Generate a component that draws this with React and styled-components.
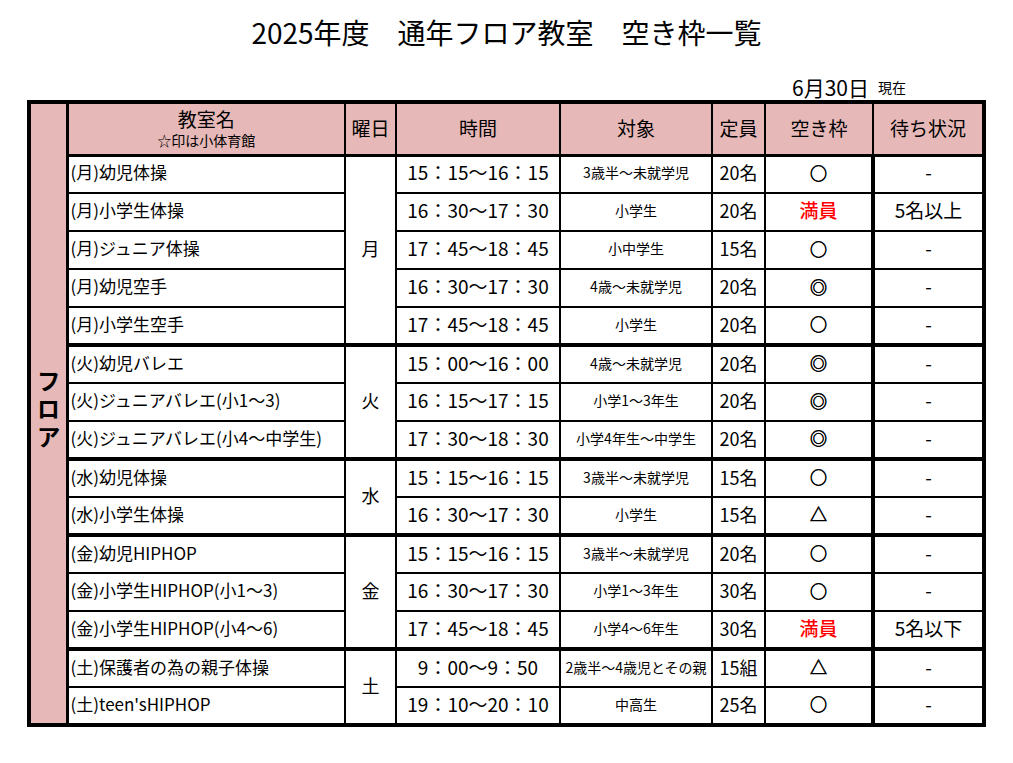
import React from 'react';
import styled, { createGlobalStyle } from 'styled-components';

const GlobalStyle = createGlobalStyle`
    html, body {
        margin: 0;
        padding: 0;
        background: #fff;
    }
    body {
        font-family: "Noto Sans CJK JP", "Noto Sans", sans-serif;
        color: #000;
    }
`;

const PINK = '#e6b8b7';

const Page = styled.div`
    width: 959px;
    margin: 0 auto;
    padding-top: 13px;
`;

const Title = styled.h1`
    margin: 0;
    text-align: center;
    font-size: 28px;
    font-weight: 400;
    line-height: 38px;
    white-space: pre;
`;

const AsOf = styled.div`
    height: 49px;
    display: flex;
    justify-content: flex-end;
    align-items: flex-end;
    gap: 9px;
    padding-right: 80px;
    line-height: 26px;
`;

const AsOfDate = styled.span`
    font-size: 21px;
`;

const AsOfLabel = styled.span`
    font-size: 14px;
`;

const Table = styled.table`
    width: 959px;
    table-layout: fixed;
    border-collapse: collapse;
    border: 4px solid #000;
`;

const HeadRow = styled.tr`
    height: 53px;
`;

const Row = styled.tr`
    height: 38px;
`;

/* 左端の「フロア」帯 */
const AreaCell = styled.td`
    background: ${PINK};
    border-right: 3px solid #000;
    padding: 0;
    text-align: center;
    vertical-align: middle;
`;

const AreaText = styled.span`
    writing-mode: vertical-rl;
    font-size: 24px;
    font-weight: 700;
    letter-spacing: 4px;
`;

const HeadCell = styled.th`
    background: ${PINK};
    border: 2px solid #000;
    border-right-width: ${props => props.$thinRight ? '1px' : '2px'};
    border-bottom: 3px solid #000;
    padding: 0 0 2px;
    font-size: 19px;
    font-weight: 400;
    line-height: 22px;
    text-align: center;
    vertical-align: middle;
    white-space: nowrap;
`;

const HeadMain = styled.div`
    line-height: 25px;
`;

const HeadSub = styled.div`
    font-size: 14px;
    line-height: 19px;
`;

const Cell = styled.td`
    border-left: ${props => props.$left || 2}px solid #000;
    border-right: 2px solid #000;
    border-top: ${props => props.$top}px solid #000;
    padding: 0 ${props => props.$align === 'left' ? '2px' : '0'} 4px;
    font-size: ${props => props.$size || 18}px;
    line-height: 24px;
    text-align: ${props => props.$align || 'center'};
    vertical-align: middle;
    white-space: nowrap;
    overflow: hidden;
    color: ${props => props.$red ? '#ff0000' : '#000'};
    font-weight: ${props => props.$red ? 500 : 400};
`;

/* ○ ◎ △ の記号は太めに */
const Mark = styled.span`
    font-size: 17px;
    -webkit-text-stroke: 0.6px #000;
`;

const groups = [
    { day: '月', rows: [
        ['(月)幼児体操', '15：15～16：15', '3歳半～未就学児', '20名', '○', '-'],
        ['(月)小学生体操', '16：30～17：30', '小学生', '20名', '満員', '5名以上'],
        ['(月)ジュニア体操', '17：45～18：45', '小中学生', '15名', '○', '-'],
        ['(月)幼児空手', '16：30～17：30', '4歳～未就学児', '20名', '◎', '-'],
        ['(月)小学生空手', '17：45～18：45', '小学生', '20名', '○', '-'],
    ] },
    { day: '火', rows: [
        ['(火)幼児バレエ', '15：00～16：00', '4歳～未就学児', '20名', '◎', '-'],
        ['(火)ジュニアバレエ(小1～3)', '16：15～17：15', '小学1～3年生', '20名', '◎', '-'],
        ['(火)ジュニアバレエ(小4～中学生)', '17：30～18：30', '小学4年生～中学生', '20名', '◎', '-'],
    ] },
    { day: '水', rows: [
        ['(水)幼児体操', '15：15～16：15', '3歳半～未就学児', '15名', '○', '-'],
        ['(水)小学生体操', '16：30～17：30', '小学生', '15名', '△', '-'],
    ] },
    { day: '金', rows: [
        ['(金)幼児HIPHOP', '15：15～16：15', '3歳半～未就学児', '20名', '○', '-'],
        ['(金)小学生HIPHOP(小1～3)', '16：30～17：30', '小学1～3年生', '30名', '○', '-'],
        ['(金)小学生HIPHOP(小4～6)', '17：45～18：45', '小学4～6年生', '30名', '満員', '5名以下'],
    ] },
    { day: '土', rows: [
        ['(土)保護者の為の親子体操', '9：00～9：50', '2歳半～4歳児とその親', '15組', '△', '-'],
        ["(土)teen'sHIPHOP", '19：10～20：10', '中高生', '25名', '○', '-'],
    ] },
];

const totalRows = groups.reduce((n, g) => n + g.rows.length, 0);

const App = () => (
    <Page>
        <GlobalStyle />
        <Title>{'2025年度　通年フロア教室　空き枠一覧'}</Title>
        <AsOf>
            <AsOfDate>6月30日</AsOfDate>
            <AsOfLabel>現在</AsOfLabel>
        </AsOf>
        <Table>
            <colgroup>
                <col style={{ width: 38 }} />
                <col style={{ width: 278 }} />
                <col style={{ width: 51 }} />
                <col style={{ width: 164 }} />
                <col style={{ width: 152 }} />
                <col style={{ width: 53 }} />
                <col style={{ width: 108 }} />
                <col style={{ width: 111 }} />
            </colgroup>
            <tbody>
                <HeadRow>
                    <AreaCell rowSpan={totalRows + 1}>
                        <AreaText>フロア</AreaText>
                    </AreaCell>
                    <HeadCell>
                        <HeadMain>教室名</HeadMain>
                        <HeadSub>☆印は小体育館</HeadSub>
                    </HeadCell>
                    <HeadCell>曜日</HeadCell>
                    <HeadCell>時間</HeadCell>
                    <HeadCell>対象</HeadCell>
                    <HeadCell>定員</HeadCell>
                    <HeadCell $thinRight>空き枠</HeadCell>
                    <HeadCell>待ち状況</HeadCell>
                </HeadRow>
                {groups.map((g, gi) => g.rows.map((r, ri) => {
                    const top = ri === 0 ? (gi === 0 ? 3 : 4) : 2;
                    const full = r[4] === '満員';
                    return (
                        <Row key={`${gi}-${ri}`}>
                            <Cell $top={top} $left={3} $align="left" $size={17}>{r[0]}</Cell>
                            {ri === 0 && (
                                <Cell $top={top} rowSpan={g.rows.length}>{g.day}</Cell>
                            )}
                            <Cell $top={top} $size={19}>{r[1]}</Cell>
                            <Cell $top={top} $size={14}>{r[2]}</Cell>
                            <Cell $top={top}>{r[3]}</Cell>
                            <Cell $top={top} $size={19} $red={full}>
                                {full ? r[4] : <Mark>{r[4]}</Mark>}
                            </Cell>
                            <Cell $top={top} $left={4} $size={19}>{r[5]}</Cell>
                        </Row>
                    );
                }))}
            </tbody>
        </Table>
    </Page>
);

export default App;
